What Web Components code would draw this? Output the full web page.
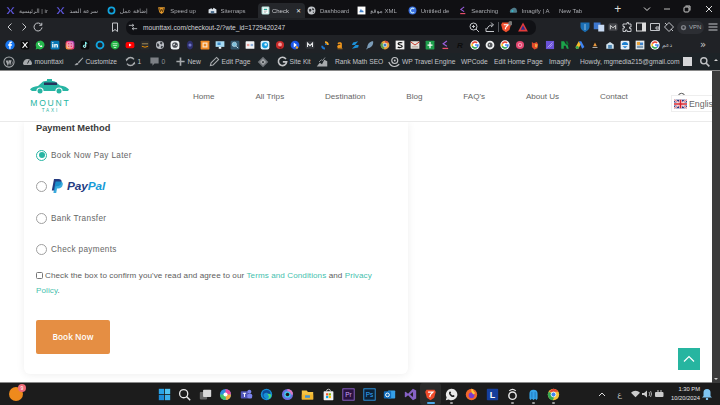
<!DOCTYPE html>
<html lang="en">
<head>
<meta charset="utf-8">
<title>Checkout</title>
<style>
  html, body { margin: 0; height: 100%; overflow: hidden; background: #fff; }
  body { display: flex; flex-direction: column; width: 720px; height: 405px; font-family: "Liberation Sans", Arial, sans-serif; }
</style>
</head>
<body>
<browser-tabs></browser-tabs>
<browser-toolbar url="mounttaxi.com/checkout-2/?wte_id=1729420247"></browser-toolbar>
<bookmarks-bar></bookmarks-bar>
<wp-admin-bar></wp-admin-bar>
<site-viewport>
  <site-header></site-header>
  <payment-card title="Payment Method">
    <pay-option checked>Book Now Pay Later</pay-option>
    <pay-option><paypal-logo></paypal-logo></pay-option>
    <pay-option>Bank Transfer</pay-option>
    <pay-option>Check payments</pay-option>
  </payment-card>
  <back-to-top></back-to-top>
</site-viewport>
<windows-taskbar></windows-taskbar>

<script>
// all icons are drawn on a 16x16 box
const G_ARCS = `<circle cx="8" cy="8" r="7.5" fill="#fff"/>
  <path d="M8 4.4a3.6 3.6 0 0 1 2.5 1l1.7-1.7A6 6 0 0 0 2.7 5.3l2 1.5A3.6 3.6 0 0 1 8 4.4z" fill="#ea4335"/>
  <path d="M2.7 5.3a6 6 0 0 0 0 5.4l2-1.5a3.6 3.6 0 0 1 0-2.4z" fill="#fbbc05"/>
  <path d="M2.7 10.7A6 6 0 0 0 12 12.4l-1.9-1.5a3.6 3.6 0 0 1-5.4-1.7z" fill="#34a853"/>
  <path d="M14 8c0-.5 0-.9-.2-1.3H8v2.4h3.4a3 3 0 0 1-1.3 1.8l1.9 1.5A6 6 0 0 0 14 8z" fill="#4285f4"/>`;
const ICONS = {
  fb: `<circle cx="8" cy="8" r="7.5" fill="#1877f2"/><path d="M9 14V9h2l.3-2.2H9V5.5c0-.7.3-1 1-1h1.3V2.6C11 2.5 10.4 2.5 9.8 2.5 7.9 2.5 6.8 3.6 6.8 5.4v1.4H5V9h1.8v5z" fill="#fff"/>`,
  x: `<rect x="1" y="1" width="14" height="14" rx="3" fill="#0b0b0b"/><path d="M12 3.5l-8 9" stroke="#fff" stroke-width="1.7"/><path d="M3.5 3.5h2l7 9h-2z" fill="#fff"/>`,
  wa: `<path d="M8 1a7 7 0 0 0-6 10.5L1 15l3.6-1A7 7 0 1 0 8 1z" fill="#25b84c"/><path d="M5.5 4.5c-1 1-.8 2.600.6 4.300s3 2.700 4.400 2.300c1-.3 1.400-1.300 1.200-1.600L10.300 8.500l-.9.8C8.500 9 7 7.600 6.800 6.600l.8-.9L6.700 4.300c-.3-.1-.9 0-1.200.2z" fill="#fff"/>`,
  in: `<rect x="1" y="1" width="14" height="14" rx="2" fill="#0a78b5"/><path d="M3.5 6.5h2V12h-2zM6.8 6.5h2v.8c.4-.6 1-1 1.900-1 1.300 0 2 .9 2 2.400V12h-2V9c0-.7-.3-1-.9-1s-1 .4-1 1.100V12h-2z" fill="#fff"/><circle cx="4.5" cy="4.4" r="1.1" fill="#fff"/>`,
  ig: `<defs><linearGradient id="ig" x1="0" y1="1" x2="1" y2="0"><stop offset="0" stop-color="#fdb32b"/><stop offset=".5" stop-color="#ea2f6e"/><stop offset="1" stop-color="#8a3ac0"/></linearGradient></defs><rect x="1" y="1" width="14" height="14" rx="4" fill="url(#ig)"/><rect x="3.5" y="3.5" width="9" height="9" rx="2.5" fill="none" stroke="#fff"/><circle cx="8" cy="8" r="2" fill="none" stroke="#fff"/>`,
  tt: `<rect x="1" y="1" width="14" height="14" rx="3" fill="#0b0b0b"/><path d="M8.8 3v6.800a1.800 1.800 0 1 1-1.800-1.800M8.800 3c.2 1.500 1.200 2.500 2.800 2.700" fill="none" stroke="#25f4ee" stroke-width="1.4"/><path d="M9.3 3.400v6.800a1.800 1.800 0 1 1-1.800-1.800" fill="none" stroke="#fff" stroke-width="1.2"/>`,
  ring: `<circle cx="8" cy="8" r="5.5" fill="none" stroke="#11a5e0" stroke-width="3"/>`,
  gcir: `<circle cx="8" cy="8" r="7" fill="#1fb141"/><path d="M4 6h8M4.500 9h7M6 12h4" stroke="#d9f6df" stroke-width="1.3"/>`,
  yt: `<rect x="1" y="3" width="14" height="10" rx="3" fill="#f00"/><path d="M6.500 5.500v5l4-2.500z" fill="#fff"/>`,
  amz: `<rect x="1" y="1" width="14" height="14" rx="2" fill="#2b2b2b"/><path d="M3 6h10" stroke="#8c7a52" stroke-width="2"/><path d="M3 10q5 3 10 0" fill="none" stroke="#f90" stroke-width="1.4"/>`,
  globe: `<circle cx="8" cy="8" r="6.5" fill="#b9bcc2"/><path d="M3 5l3 1 1 3-2 2-2-2zM9 2l3 2-1 3-3-1zM10 9l3 1-2 3-2-1z" fill="#3c4046"/>`,
  wglobe: `<rect x="1" y="1" width="14" height="14" rx="4" fill="#eceff1"/><circle cx="8" cy="8" r="4.5" fill="#4a4e55"/><path d="M5 7l2-2 1 2-2 2zM9 8l2 0-1 2z" fill="#eceff1"/>`,
  shield: `<path d="M8 1c3 0 5 3 5 7s-2 7-5 7-5-3-5-7 2-7 5-7z" fill="#2d2f6e"/><circle cx="8" cy="8" r="2.5" fill="#7378c8"/>`,
  ora: `<rect x="1" y="1" width="14" height="14" rx="1" fill="#f08a24"/><rect x="4" y="4" width="8" height="8" fill="#fbe2c6"/><rect x="6" y="6" width="4" height="4" fill="#f08a24"/>`,
  mon: `<rect x="1" y="2" width="14" height="9" fill="#a8dcf5"/><rect x="6" y="11" width="4" height="3" fill="#e8f2f8"/><rect x="4" y="4" width="5" height="4" fill="#3b87c8"/>`,
  mag: `<rect x="1" y="1" width="14" height="14" rx="2" fill="#33566c"/><circle cx="7" cy="7" r="3.5" fill="#7dc0dc" stroke="#c8e2ee"/><path d="M10 10l3 3" stroke="#c8e2ee" stroke-width="1.5"/>`,
  net: `<rect x="1" y="2" width="14" height="12" rx="1" fill="#f2f4f6"/><path d="M3 7h4M3 9h4" stroke="#e2574c"/><path d="M9 7h4M9 9h4" stroke="#3b78c9"/>`,
  sky: `<rect x="1" y="1" width="14" height="14" rx="3" fill="#ddf2fb"/><circle cx="8" cy="8" r="5" fill="#189ee0"/><circle cx="9" cy="7" r="2" fill="#ddf2fb"/>`,
  red: `<circle cx="8" cy="8" r="6.5" fill="#c92a2a"/><circle cx="8" cy="7" r="3" fill="#f39a9a"/><path d="M6 12l4-1 0 3z" fill="#7a1010"/>`,
  blu: `<circle cx="8" cy="8" r="7" fill="#1a56e8"/><path d="M6 4l5 4-5 4z" fill="#fff"/><circle cx="11" cy="12" r="2" fill="#f5a623"/>`,
  m: `<rect x="1" y="2" width="14" height="12" rx="2" fill="#33363b"/><path d="M4 11V5l4 4 4-4v6" fill="none" stroke="#e9eaec" stroke-width="1.7"/>`,
  swirl: `<path d="M8 2a6 6 0 0 1 6 6h-3a3 3 0 0 0-3-3z" fill="#f5a623"/><path d="M2 9a6 6 0 0 0 6 6v-3a3 3 0 0 1-3-3z" fill="#1a77d2"/><path d="M8 5a3 3 0 0 1 3 3H8z" fill="#1a77d2"/>`,
  a: `<path d="M4 5.5c.5-2 6.5-3 7 .5v7H8.500v-1c-2 1.800-5 1-5-1.500 0-2.200 2.300-3 5-3 .3-1.700-2-1.700-2.500-.5z" fill="#f0961c"/><path d="M4 14h8" stroke="#f0961c"/>`,
  s: `<path d="M13 2L5 4 3 8h6L3 14l10-2 1-4H8z" fill="#1c8fd6"/>`,
  feather: `<path d="M13 2C8 2 4 6 3.500 12L2 14.500l1 .5L4.500 13C10 12.500 14 8 13 2z" fill="#7b9cb8"/>`,
  chrome: `<circle cx="8" cy="8" r="7" fill="#e8a33a"/><path d="M8 1a7 7 0 0 1 6 3.500H8z" fill="#d94a38"/><path d="M2 4.500A7 7 0 0 0 6 14.700L8 8z" fill="#5a9e4b"/><circle cx="8" cy="8" r="3" fill="#3f7fc8" stroke="#fff"/>`,
  ssq: `<rect x="1" y="1" width="14" height="14" fill="#f2f2f2"/><path d="M11.500 5C11 3.800 5 3.500 5 6s6.500 1.500 6.500 4S5.500 12.500 4.500 11" fill="none" stroke="#111" stroke-width="2"/>`,
  mail: `<rect x="1" y="2" width="14" height="12" rx="1" fill="#e7e2dc"/><path d="M1 3l7 5 7-5" fill="none" stroke="#c53a2c" stroke-width="1.6"/><path d="M3 11h10" stroke="#907a6f"/>`,
  gsq: `<rect x="1" y="1" width="14" height="14" rx="1" fill="#1e9e4b"/><path d="M8 3v10M4 8h8" stroke="#fff" stroke-width="2"/>`,
  chev: `<path d="M11 1.500L5 6l6 4" fill="none" stroke="#9b5fe0" stroke-width="1.8"/><path d="M4 13.500h9" stroke="#f0506e" stroke-width="2"/>`,
  r: `<text x="8" y="13" font-family="Liberation Sans" font-weight="700" font-size="13" text-anchor="middle" fill="#0c0c0c">R</text>`,
  g: G_ARCS,
  wg: `<circle cx="8" cy="8" r="7" fill="#eff0f1"/><circle cx="8" cy="8" r="4" fill="#55585c"/><path d="M6 6l2 1-1 3z" fill="#eff0f1"/>`,
  pink: `<circle cx="8" cy="8" r="6.5" fill="#e0466f"/><circle cx="8" cy="8" r="2.8" fill="none" stroke="#f6a9be" stroke-width="1.4"/>`,
  fox: `<path d="M3 3l3 2 5-2 2 4-1 6-5 2-4-4z" fill="#e24a2b"/><path d="M8 6l4 1-1 5-3-1z" fill="#f3a443"/>`,
  pur: `<rect x="1.5" y="1.5" width="13" height="13" fill="#6a52d8"/><path d="M4 12L12 4M7 12l5-5" stroke="#d2c8fa"/>`,
  flag: `<path d="M2 2h4.500l3 5H12L14 14h-3L9 9H6v5H2z" fill="#1ba34a"/><path d="M9 2h3l2 5h-3z" fill="#0d6d30"/>`,
  ads: `<path d="M6 2h4l5 9-3.500 3z" fill="#3f85f4"/><path d="M6 2l3 5.500-4 7H2L1 11z" fill="#f7bb2a"/><circle cx="3.5" cy="12" r="2.5" fill="#34a853"/>`,
  dk: `<rect x="1" y="1" width="14" height="14" rx="1" fill="#1d1d1d"/><path d="M8 4l3 6H5z" fill="#e8963a"/><path d="M4 12h8" stroke="#fff"/>`,
  home: `<path d="M8 3l6 4v7H2V7z" fill="#cfe0ec"/><rect x="5" y="8" width="6" height="6" fill="#4f87b5"/>`,
  cloud: `<rect x="1" y="1" width="14" height="14" rx="2" fill="#e6eff6"/><path d="M3 8a5 5 0 0 1 10 0z" fill="#1c7fd0"/><path d="M4 10h8l-4 3z" fill="#1c7fd0"/>`,
  pic: `<rect x="1" y="1" width="14" height="14" fill="#e9eef2"/><rect x="3" y="3" width="5" height="5" fill="#e8a23a"/><rect x="8" y="4" width="5" height="4" fill="#3f82c9"/><rect x="3" y="9" width="10" height="4" fill="#7f9cb4"/>`,
  xmlsq: `<rect x="1" y="1" width="14" height="14" fill="#fff"/><path d="M4 11l3-6 2 4 1.500-2L12 11z" fill="#3f7fc8"/>`,
  edge: `<circle cx="8" cy="8" r="7" fill="#178fd6"/><path d="M3 8a5 5 0 0 1 10-1c0 1.800-3 2-3 .5C10 6 7 5 5 7c-1.500 1.500-.5 5.500 3 6-3 1-5-2-5-5z" fill="#0d4c9c"/><path d="M9 7c2 0 5 .5 5 2 0 3-3 5-5 4.500 1-.5 2-1.500 2-3z" fill="#4fd97a"/>`,
  untitled: `<circle cx="8" cy="8" r="7" fill="#3a6fe0"/><path d="M11 5a4 4 0 1 0 0 6" fill="none" stroke="#bfeaff" stroke-width="2"/>`,
  w: `<path d="M2 2h12l-2 9-4 3-4-3z" fill="#e49a2d"/><path d="M4.500 4l1.500 6 2-4 2 4 1.500-6" fill="none" stroke="#3a2204" stroke-width="1.3"/>`,
  nitro: `<path d="M1 2h3l4 6 4-6h3L10 8l5 6h-3L8 9l-4 5H1l5-6z" fill="#5c54d8"/>`,
  sitemap: `<path d="M1 13V6l5-2 2 2 2-3 5 3v7z" fill="#dce3ea"/><rect x="5" y="9" width="6" height="4" fill="#4d6f8f"/>`,
  check: `<rect x="1" y="1" width="14" height="14" rx="2" fill="#bfe8e2"/><rect x="3.5" y="3" width="9" height="10" fill="#fff"/><path d="M5 6h6" stroke="#25a898" stroke-width="2"/><path d="M5 9h6M5 11h4" stroke="#7a8a88"/>`,
  dash: `<circle cx="8" cy="8" r="7" fill="#c2c5c9"/><path d="M3 6l4-1 1 3-3 3zM10 3l3 3-2 2-2-2zM10 10l3 0-2 3z" fill="#2b2d31"/>`,
  imagify: `<path d="M2 12a5 5 0 0 1 3-7 5 5 0 0 1 9 3 3 3 0 0 1-1 4z" fill="#4f7b8a"/><circle cx="6" cy="9" r="2" fill="#36b6c8"/>`
};
const svg = (name, size = 10) => `<svg width="${size}" height="${size}" viewBox="0 0 16 16" aria-hidden="true">${ICONS[name]}</svg>`;

// ---------- tabs
const TABS = [
  ['nitro', 'الرئيسية | ir'], ['nitro', 'سرعة الصد'], ['ring', 'إضافة عمل'], ['w', 'Speed up'],
  ['sitemap', 'Sitemaps'], ['check', 'Check', true], ['dash', 'Dashboard'], ['xmlsq', 'موقع XML'],
  ['untitled', 'Untitled de'], ['chev', 'Searching'], ['imagify', 'Imagify | A'], [null, 'New Tab']
];
class BrowserTabs extends HTMLElement {
  connectedCallback() {
    const tabs = TABS.map(([icon, label, active]) => `
      <div class="tab ${active ? 'active' : ''}">
        ${icon ? svg(icon, 9) : ''}<span>${label}</span>${active ? '<b>✕</b>' : ''}
      </div>`).join('');
    this.attachShadow({ mode: 'open' }).innerHTML = `
      <style>
        :host { display: flex; align-items: center; height: 18px; background: #101013; padding-left: 5px; color: #a9abb0; font: 6px "Liberation Sans", "DejaVu Sans", sans-serif; }
        .tab { flex: none; box-sizing: border-box; width: 50.4px; height: 15px; margin-top: 3px; display: flex; align-items: center; gap: 4px; padding-left: 1px; overflow: hidden; white-space: nowrap; }
        .tab span { flex: 1; overflow: hidden; -webkit-mask-image: linear-gradient(90deg, #000 75%, transparent); }
        .tab.active { width: 47px; margin: 3px 1px 0 1px; padding: 0 4px 0 3px; gap: 2px; background: #25272b; border-radius: 4px 4px 0 0; color: #c7c9cd; }
        .tab b { font: 6px "DejaVu Sans", sans-serif; color: #e8e8e8; }
        .plus { margin-left: 6px; width: 20px; color: #ddd; font-size: 12px; }
        .win { margin-left: auto; display: flex; align-items: center; gap: 12px; padding-right: 7px; }
        .win svg:last-child { margin-left: 2px; }
      </style>
      ${tabs}
      <div class="plus">+</div>
      <div class="win">
        <svg width="8" height="8" viewBox="0 0 8 8"><path d="M1 2.500l3 3 3-3" fill="none" stroke="#ddd"/></svg>
        <svg width="8" height="8" viewBox="0 0 8 8"><path d="M1 4h6" stroke="#bbb"/></svg>
        <svg width="8" height="8" viewBox="0 0 8 8"><rect x="1" y="2" width="5" height="5" rx="1" fill="none" stroke="#ccc"/><path d="M2.500 1H7v4.500" fill="none" stroke="#ccc"/></svg>
        <svg width="8" height="8" viewBox="0 0 8 8"><path d="M1 1l6 6M7 1L1 7" stroke="#ddd"/></svg>
      </div>`;
  }
}

// ---------- address bar row
class BrowserToolbar extends HTMLElement {
  connectedCallback() {
    const line = (d, w = 12) => `<svg width="${w}" height="12" viewBox="0 0 12 12"><path d="${d}" fill="none" stroke="#c4c6ca" stroke-width="1"/></svg>`;
    this.attachShadow({ mode: 'open' }).innerHTML = `
      <style>
        :host { display: flex; align-items: center; height: 18px; background: #202226; padding-left: 4px; color: #d4d6da; font: 6.6px "Liberation Sans", "DejaVu Sans", sans-serif; }
        .group { display: flex; align-items: center; }
        .nav { gap: 2px; width: 117px; }
        .url { box-sizing: border-box; width: 410px; height: 15px; margin-left: 5px; background: #101115; border-radius: 7px; padding: 0 7px 0 2px; display: flex; align-items: center; gap: 5px; }
        .url span { flex: 1; }
        .url .tools { display: flex; align-items: center; gap: 4px; }
        .sep { margin: 0 -2.500px; }
        .tri { margin-left: 1px; }
        .ext { margin-left: 43px; gap: 2px; }
        .vpn { display: flex; align-items: center; gap: 2px; height: 13px; padding: 0 3px; border-radius: 7px; background: #2c2e33; font-size: 6px; color: #aeb0b5; }
        .burger { margin-left: 1px; display: flex; }
      </style>
      <div class="group nav">
        ${line('M7.500 2.500L4 6l3.500 3.500')}
        ${line('M4.500 2.500L8 6 4.500 9.500')}
        ${line('M9.500 4A4 4 0 1 0 10 6.500M9.800 1.800V4.300H7.300')}
        <span style="margin-left:63px;display:flex">${line('M3.500 2h5v8.500L6 8.500 3.500 10.500z')}</span>
      </div>
      <div class="url">
        ${line('M1 4h6M5 2.500L7 4 5 5.500M11 8H5M7 6.500L5 8l2 1.500', 10)}
        <span>${this.getAttribute('url')}</span>
        <div class="tools">
          ${line('M8 8l3 3M2 5.500a3.500 3.500 0 1 0 7 0 3.500 3.500 0 1 0-7 0M4 5.500h3M5.500 4v3')}
          ${line('M2 7v3.500h8M3 8c1-3 3-4 5.500-4M7 1.500L9.500 4 7 6')}
          <svg class="sep" width="1" height="10"><rect width="1" height="10" fill="#55575c"/></svg>
          <svg width="12" height="12" viewBox="0 0 16 16"><path d="M3 2h10l1.500 3-2 7L8 15l-4.500-3-2-7z" fill="#f1502f"/><path d="M5 5h6L8 8l-1 3" fill="none" stroke="#fff" stroke-width="1.5"/><circle cx="14" cy="3" r="3" fill="#777"/></svg>
          <svg class="tri" width="12" height="12" viewBox="0 0 16 16"><path d="M8 2l6.500 12h-13z" fill="#e23b3b"/><path d="M8 6l3 5.500H5z" fill="#2c2f8f"/></svg>
        </div>
      </div>
      <div class="group ext">
        <svg width="12" height="12" viewBox="0 0 16 16"><path d="M2 2h12v6c0 3-3 5-6 7-3-2-6-4-6-7z" fill="#1b6fb5"/><path d="M8 4v8" stroke="#bcd9f0"/></svg>
        <svg width="12" height="12" viewBox="0 0 16 16"><rect x="1" y="2" width="9" height="9" fill="#3d77cf"/><rect x="7" y="5" width="8" height="9" fill="#c9dbf3"/></svg>
        <svg width="12" height="12" viewBox="0 0 16 16"><rect x="2" y="3" width="12" height="10" rx="2" fill="#45474c"/><path d="M4.500 11V6l3.500 3 3.500-3v5" fill="none" stroke="#d9d9d9" stroke-width="1.2"/></svg>
        ${line('M4 3h2V1.500h1.500V3H10v3H8.500v1.500H10V10.500H6V9H4.500v1.500H2V7h1.500V5.500H2V3z')}
        <svg width="12" height="12" viewBox="0 0 12 12"><rect x="1.500" y="2" width="9" height="8" fill="none" stroke="#ddd"/><rect x="7" y="2" width="3.500" height="8" fill="#ddd"/></svg>
        ${line('M1.500 2.500h9v7h-9zM7 6h3v2H7z')}
        ${line('M6 1.500L10.500 6 6 10.500 1.500 6zM4 4L2 2M8 8l2 2')}
        <div class="vpn">
          <svg width="7" height="7" viewBox="0 0 8 8"><circle cx="4" cy="4" r="3" fill="#7e8187"/><circle cx="4" cy="4" r="1.3" fill="#2c2e33"/></svg>VPN
        </div>
        <span class="burger">${line('M1.500 3h9M1.500 6h9M1.500 9h9')}</span>
      </div>`;
  }
}

// ---------- bookmarks
const MARKS = ['fb','x','wa','in','ig','tt','ring','gcir','yt','amz','globe','wglobe','shield','ora','mon','mag','net','sky','red','blu','m','swirl','a','s',
  'feather','chrome','ssq','mail','gsq','chev','r','g','wg','g','pink','fox','pur','flag','ads','dk','home','cloud','pic','g'];
class BookmarksBar extends HTMLElement {
  connectedCallback() {
    this.attachShadow({ mode: 'open' }).innerHTML = `
      <style>
        :host { display: flex; align-items: center; height: 17px; background: #202226; padding-left: 2px; color: #b9bbbf; font: 6px "DejaVu Sans", sans-serif; }
        i { flex: none; width: 15px; display: flex; justify-content: center; }
        .label { width: 38px; }
        .more { font: 10px "DejaVu Sans", sans-serif; color: #c8c8c8; }
      </style>
      ${MARKS.map(m => `<i>${svg(m)}</i>`).join('')}
      <span class="label">دعم</span>
      <span class="more">»</span>`;
  }
}

// ---------- wordpress bar
const WP_ICONS = {
  wp: `<circle cx="8" cy="8" r="6.8" fill="none" stroke="#a7aaad" stroke-width="1.4"/><path d="M3.500 6l3 7.500 1.500-4.500-1.200-3zM7.500 5.500h4L9.500 13l-1-3z M12.700 6.500c.6 2 0 4-1.500 5.500z" fill="#a7aaad"/>`,
  dash: `<path d="M1.500 11a6.500 6.500 0 1 1 13 0l-1 2h-11z" fill="#a7aaad"/><path d="M8 11l2.500-5" stroke="#1d2327" stroke-width="1.3"/>`,
  brush: `<path d="M14 2L7 9l1.500 1.500L15 3zM6 10c-2 0-2 2-4 3 3 1 6 0 6-2z" fill="#a7aaad"/>`,
  sync: `<path d="M13 5A5.800 5.800 0 0 0 3 5M3 11a5.800 5.800 0 0 0 10 0" fill="none" stroke="#a7aaad" stroke-width="2"/><path d="M1 4l4 .5L2 8zM15 12l-4-.5L14 8z" fill="#a7aaad"/>`,
  bubble: `<path d="M2 2h12v9H8l-3 3v-3H2z" fill="#7c8085"/>`,
  plus: `<path d="M8 2v12M2 8h12" stroke="#a7aaad" stroke-width="2.4"/>`,
  pen: `<path d="M11 2l3 3-8 8-4 1 1-4z" fill="none" stroke="#a7aaad" stroke-width="1.5"/>`,
  gem: `<path d="M8 1l7 7-7 7-7-7z" fill="#6f7479"/><path d="M8 4l4 4-4 4-4-4z" fill="#a7aaad"/><path d="M8 6.500L9.500 8 8 9.500 6.500 8z" fill="#1d2327"/>`,
  g: `<path d="M13 4.500A6 6 0 1 0 14 8.500H8.500" fill="none" stroke="#c3c4c7" stroke-width="2.4"/>`,
  rank: `<path d="M1 14l4-5 3 2 3-6 4 2v7z" fill="#a7aaad"/><path d="M4 8l3-3 2 1 3-4" fill="none" stroke="#a7aaad"/>`,
  travel: `<circle cx="9" cy="6" r="4" fill="none" stroke="#c3c4c7" stroke-width="1.5"/><path d="M1 8c2 5 5 6 8 6 2 0 4-1 6-3" fill="none" stroke="#c3c4c7" stroke-width="1.5"/><circle cx="9" cy="6" r="1.3" fill="#c3c4c7"/>`,
  find: `<circle cx="7" cy="7" r="4.500" fill="none" stroke="#c3c4c7" stroke-width="2"/><path d="M10.500 10.500L15 15" stroke="#c3c4c7" stroke-width="2.4"/>`
};
const wpIcon = (name, size = 11) => `<svg width="${size}" height="${size}" viewBox="0 0 16 16">${WP_ICONS[name]}</svg>`;
class WpAdminBar extends HTMLElement {
  connectedCallback() {
    // icon, label, slot width, gap between icon and label
    const items = [
      [wpIcon('wp', 12), '', 18.5],
      [wpIcon('dash'), 'mounttaxi', 51],
      [wpIcon('brush'), 'Customize', 52],
      [wpIcon('sync'), '1', 24],
      [wpIcon('bubble'), '<span class="dim">0</span>', 26],
      [wpIcon('plus'), 'New', 34],
      [wpIcon('pen'), 'Edit Page', 48.5],
      [wpIcon('gem', 12), '', 19.5],
      [wpIcon('g'), 'Site Kit', 39.5],
      [wpIcon('rank', 12), 'Rank Math SEO', 72, 7],
      [wpIcon('travel', 12), 'WP Travel Engine', 73],
      ['', 'WPCode', 33],
      ['', 'Edit Home Page', 55],
      ['', 'Imagify', 31],
      ['', 'Howdy, mgmedia215@gmail.com', 103]
    ];
    this.attachShadow({ mode: 'open' }).innerHTML = `
      <style>
        :host { display: flex; align-items: center; height: 17px; background: #1d2327; padding-left: 3px; color: #c3c4c7; font: 6.700px "Liberation Sans", "DejaVu Sans", sans-serif; white-space: nowrap; }
        .item { flex: none; display: flex; align-items: center; gap: 2px; }
        .dim { color: #8c8f94; }
        .avatar { width: 9px; height: 9px; background: #d5d6d8; }
        .find { margin-left: 7px; display: flex; }
      </style>
      ${items.map(([icon, text, w, gap]) => `<div class="item" style="width:${w}px${gap ? `;gap:${gap}px` : ''}">${icon}${text ? `<span>${text}</span>` : ''}</div>`).join('')}
      <div class="avatar"></div>
      <div class="find">${wpIcon('find')}</div>`;
  }
}

// ---------- page area with scrollbar
class SiteViewport extends HTMLElement {
  constructor() {
    super();
    this.attachShadow({ mode: 'open' }).innerHTML = `
      <style>
        :host { display: flex; flex: 1; min-height: 0; border-top: 1px solid #8a8a8a; }
        .page { position: relative; flex: 1; min-width: 0; display: flex; flex-direction: column; background: #fff; overflow: hidden; border-bottom: 1px solid #8a8a8a; }
        .scroll { width: 8px; background: #3b3b3b; display: flex; flex-direction: column; justify-content: space-between; align-items: center; padding: 0 0 3px; }
        .scroll i { width: 0; height: 0; border: 2.500px solid transparent; }
        .up { border-top: 0 !important; border-bottom-color: #cfcfcf !important; margin-top: -12px; }
        .down { border-bottom: 0 !important; border-top-color: #cfcfcf !important; }
      </style>
      <div class="page"><slot></slot></div>
      <div class="scroll"><i class="up"></i><i class="down"></i></div>`;
  }
}

// ---------- site header
class SiteHeader extends HTMLElement {
  connectedCallback() {
    const links = ["Home", "All Trips", "Destination", "Blog", "FAQ's", "About Us", "Contact"];
    this.attachShadow({ mode: 'open' }).innerHTML = `
      <style>
        :host { position: relative; z-index: 2; flex: none; display: flex; align-items: center; height: 50px; background: #fff; border-bottom: 1px solid #eaeaea; font-family: "Liberation Sans", Arial, sans-serif; }
        .logo { margin-left: 30px; width: 39px; display: flex; flex-direction: column; align-items: center; color: #27b5a3; }
        .logo svg { display: block; }
        .mount { font: 8.600px "Liberation Sans", sans-serif; letter-spacing: 1.700px; margin-right: -1.700px; line-height: 10px; margin-top: 3px; }
        .taxi { font: 4.600px "Liberation Sans", sans-serif; letter-spacing: 1.900px; margin-right: -1.900px; line-height: 5px; margin-top: .5px; }
        nav { margin-left: 124px; display: flex; gap: 40.800px; color: #666; font-size: 8.100px; }
        .search { position: absolute; left: 677px; top: 21px; }
        .lang { position: absolute; left: 671px; top: 24px; box-sizing: border-box; width: 41px; height: 17px; padding-left: 2px; background: #fff; border: 1px solid #eee; border-right: 0; display: flex; align-items: center; gap: 2px; font-size: 8.800px; color: #666; overflow: hidden; white-space: nowrap; }
      </style>
      <div class="logo">
        <svg width="39" height="16" viewBox="0 0 39 16">
          <path d="M0 10.500c1-2 4-3 8-3.500l5-4.500c2-1 10-1 12 0l5 4c4 .5 7 1.500 9 4l-1 1.500H2z" fill="#27b5a3"/>
          <rect x="17" y="0" width="5" height="2" fill="#27b5a3"/>
          <rect x="14" y="3.500" width="13" height="2.500" fill="#25335c"/>
          <circle cx="10" cy="12" r="3.600" fill="#fff"/><circle cx="10" cy="12" r="2.500" fill="#27b5a3"/>
          <circle cx="29" cy="12" r="3.600" fill="#fff"/><circle cx="29" cy="12" r="2.500" fill="#27b5a3"/>
        </svg>
        <div class="mount">MOUNT</div>
        <div class="taxi">TAXI</div>
      </div>
      <nav>${links.map(l => `<span>${l}</span>`).join('')}</nav>
      <svg class="search" width="9" height="9" viewBox="0 0 9 9"><circle cx="4.500" cy="4.500" r="3.200" fill="none" stroke="#555"/></svg>
      <div class="lang">
        <svg width="13" height="10" viewBox="0 0 60 40" style="flex:none">
          <rect width="60" height="40" fill="#27337f"/>
          <path d="M0 0l60 40M60 0L0 40" stroke="#fff" stroke-width="8"/>
          <path d="M0 0l60 40M60 0L0 40" stroke="#d8242c" stroke-width="3"/>
          <path d="M30 0v40M0 20h60" stroke="#fff" stroke-width="13"/>
          <path d="M30 0v40M0 20h60" stroke="#d8242c" stroke-width="8"/>
        </svg>English
      </div>`;
  }
}

// ---------- payment card
class PaymentCard extends HTMLElement {
  connectedCallback() {
    this.attachShadow({ mode: 'open' }).innerHTML = `
      <style>
        :host { display: block; flex: none; box-sizing: border-box; width: 384px; margin-left: 24px; padding: 0 12px; height: 252px; background: #fff; border-radius: 0 0 6px 6px; box-shadow: 0 1px 8px rgba(0,0,0,.07); color: #666; font-family: "Liberation Sans", Arial, sans-serif; }
        h2 { margin: 0; font-size: 9.300px; line-height: 12px; color: #3b3b3b; font-weight: 700; }
        .options { display: flex; flex-direction: column; margin-top: 5.400px; }
        .terms { margin: 3.100px 0 0; font-size: 8.100px; line-height: 15px; letter-spacing: .08px; color: #5d5d5d; }
        .terms a { color: #45bfae; text-decoration: none; }
        .box { display: inline-block; box-sizing: border-box; width: 7px; height: 7px; border: 1px solid #777; border-radius: 1.500px; background: #fff; margin-right: 2px; vertical-align: -.5px; }
        button { display: block; margin-top: 21.500px; width: 74px; height: 34px; padding: 0; border: 0; border-radius: 2px; background: #e58e43; color: #fff; font: 600 8.300px "Open Sans", sans-serif; }
      </style>
      <h2>${this.getAttribute('title')}</h2>
      <div class="options"><slot></slot></div>
      <p class="terms"><span class="box"></span>Check the box to confirm you've read and agree to our <a>Terms and Conditions</a> and <a>Privacy</a> <a>Policy</a>.</p>
      <button>Book Now</button>`;
  }
}

class PayOption extends HTMLElement {
  connectedCallback() {
    const on = this.hasAttribute('checked');
    this.attachShadow({ mode: 'open' }).innerHTML = `
      <style>
        :host { display: flex; align-items: center; gap: 4px; height: 31.500px; font-size: 8.200px; letter-spacing: .34px; color: #666; }
        .radio { flex: none; box-sizing: border-box; width: 11px; height: 11px; border-radius: 50%; border: 1px solid ${on ? '#27b5a3' : '#a0a0a0'}; display: flex; align-items: center; justify-content: center; }
        .radio i { width: 6px; height: 6px; border-radius: 50%; background: #27b5a3; }
      </style>
      <div class="radio">${on ? '<i></i>' : ''}</div>
      <slot></slot>`;
  }
}

class PaypalLogo extends HTMLElement {
  connectedCallback() {
    this.attachShadow({ mode: 'open' }).innerHTML = `
      <style>
        :host { display: flex; align-items: center; gap: 4px; margin-top: -1px; }
        span { font: italic 700 11.800px "Liberation Sans", sans-serif; letter-spacing: -.1px; color: #253b80; }
        b { color: #179bd7; }
      </style>
      <svg width="12" height="14" viewBox="0 0 12 14">
        <path d="M3 0h4.500C10 0 11 1.500 10.500 3.500 10 6 8.300 7.300 6 7.300H4.600L3.800 11.500H.8z" fill="#253b80"/>
        <path d="M4.600 2.500h4.500c2.300 0 3 1.400 2.600 3.300-.5 2.500-2.200 3.700-4.500 3.700H6L5.200 14H2.400z" fill="#179bd7" opacity=".85"/>
      </svg>
      <span>Pay<b>Pal</b></span>`;
  }
}

class BackToTop extends HTMLElement {
  connectedCallback() {
    this.attachShadow({ mode: 'open' }).innerHTML = `
      <style>
        :host { position: absolute; left: 678px; top: 277px; width: 22px; height: 22px; background: #26b5a0; display: flex; align-items: center; justify-content: center; }
      </style>
      <svg width="12" height="8" viewBox="0 0 12 8"><path d="M1 6.500l5-5 5 5" fill="none" stroke="#fff" stroke-width="1.2"/></svg>`;
  }
}

// ---------- taskbar
const TB = {
  win: `<rect x="1" y="1" width="6.500" height="6.500" fill="#2aa3e6"/><rect x="8.500" y="1" width="6.500" height="6.500" fill="#4fc3f2"/><rect x="1" y="8.500" width="6.500" height="6.500" fill="#1c8cd8"/><rect x="8.500" y="8.500" width="6.500" height="6.500" fill="#3bb0ec"/>`,
  find: `<circle cx="7" cy="7" r="5" fill="none" stroke="#e8e8e8" stroke-width="1.6"/><path d="M10.500 10.500L15 15" stroke="#e8e8e8" stroke-width="1.8"/>`,
  view: `<rect x="1" y="5" width="9" height="9" rx="1" fill="#666"/><rect x="5" y="2" width="10" height="9" rx="1" fill="#d9d9d9"/>`,
  copilot: `<circle cx="8" cy="8" r="6.800" fill="#2f8fe0"/><path d="M8 1.200A6.800 6.800 0 0 1 14.800 8H8z" fill="#e84aa0"/><path d="M8 8h6.800A6.800 6.800 0 0 1 8 14.800z" fill="#f3a93c"/><path d="M1.200 8A6.800 6.800 0 0 0 8 14.800V8z" fill="#45c46b"/><circle cx="8" cy="8" r="2.500" fill="#fff"/>`,
  teams: `<rect x="1" y="4" width="9" height="9" rx="1" fill="#4f55b8"/><circle cx="11.500" cy="4.500" r="2.500" fill="#7b83eb"/><rect x="9" y="7" width="6" height="6" rx="2" fill="#7b83eb"/><path d="M3.500 6.500h4M5.500 6.500V11" stroke="#fff" stroke-width="1.2"/>`,
  edge: ICONS.edge,
  copilot2: `<circle cx="8" cy="8" r="6.800" fill="#6a70e0"/><circle cx="8" cy="8" r="4" fill="#40c4e8"/><circle cx="8" cy="8" r="2.200" fill="#1c1c1c"/><path d="M8 1.200A6.800 6.800 0 0 1 14.800 8H12a4 4 0 0 0-4-4z" fill="#e07ac0"/>`,
  folder: `<path d="M1 3h6l1.500 2H15v9H1z" fill="#f6c343"/><rect x="1" y="8" width="14" height="6" fill="#f1b52e"/><rect x="5" y="9" width="6" height="3" fill="#3e93d6"/>`,
  store: `<rect x="2" y="4" width="12" height="11" rx="1" fill="#f0f0f0"/><path d="M5.500 4a2.500 2.500 0 0 1 5 0" fill="none" stroke="#ddd"/><rect x="5" y="6.500" width="2.700" height="2.700" fill="#f25022"/><rect x="8.300" y="6.500" width="2.700" height="2.700" fill="#7fba00"/><rect x="5" y="9.800" width="2.700" height="2.700" fill="#00a4ef"/><rect x="8.300" y="9.800" width="2.700" height="2.700" fill="#ffb900"/>`,
  pr: `<rect x="1" y="1" width="14" height="14" fill="#2a1240" stroke="#9a6ce0"/><text x="8" y="11" text-anchor="middle" font-family="Liberation Sans" font-size="8" fill="#c9a3f5">Pr</text>`,
  ps: `<rect x="1" y="1" width="14" height="14" fill="#0c2238" stroke="#31a8ff"/><text x="8" y="11" text-anchor="middle" font-family="Liberation Sans" font-size="8" fill="#31a8ff">Ps</text>`,
  outlook: `<rect x="6" y="3" width="9" height="10" rx="1" fill="#35a0e8"/><rect x="1" y="4" width="9" height="9" rx="1" fill="#0f6cbd"/><circle cx="5.500" cy="8.500" r="2.300" fill="none" stroke="#fff" stroke-width="1.2"/>`,
  vs: `<path d="M11 1l4 2v10l-4 2-6-6-3 2.500L1 11V5l1-.5L5 7z" fill="#8661c5"/><path d="M11 5L7.500 8l3.500 3z" fill="#1c1c1c"/>`,
  brave: `<path d="M3 2h10l1.500 3-2 7L8 15l-4.500-3-2-7z" fill="#ef4a2a"/><path d="M5 5h6L8 8l-1 3" fill="none" stroke="#fff" stroke-width="1.5"/>`,
  wa: `<path d="M8 1a7 7 0 0 0-6 10.500L1 15l3.600-1A7 7 0 1 0 8 1z" fill="#e8e8e8"/><path d="M5.500 4.500c-1 1-.8 2.600.6 4.300s3 2.700 4.400 2.300c1-.3 1.400-1.300 1.200-1.600L10.300 8.500l-.9.8C8.500 9 7 7.600 6.800 6.600l.8-.9L6.700 4.300c-.3-.1-.9 0-1.200.2z" fill="#1c1c1c"/>`,
  firefox: `<circle cx="8" cy="8" r="7" fill="#f2662c"/><circle cx="8" cy="9" r="3.500" fill="#7a3bd0"/><path d="M8 1c3 1 2 4 5 5l-3 2c-1-2-3-3-2-7z" fill="#ffc93c"/>`,
  l: `<rect x="1" y="1" width="14" height="14" rx="1" fill="#153e9c"/><text x="8" y="12" text-anchor="middle" font-family="Liberation Sans" font-weight="700" font-size="11" fill="#fff">L</text>`,
  ring: `<circle cx="8" cy="9.500" r="4.500" fill="none" stroke="#e8e8e8" stroke-width="1.8"/><path d="M4 3.500a6 6 0 0 1 8 0" fill="none" stroke="#e8e8e8" stroke-width="1.5"/>`,
  blue: `<path d="M3 13V7a5 5 0 0 1 10 0v6l-1.500 2-1.500-2-2 2-2-2-1.500 2z" fill="#36a3e8"/><path d="M6 5v7M10 5v7" stroke="#1a6fb5"/>`,
  chrome: `<circle cx="8" cy="8" r="7" fill="#f5c33b"/><path d="M8 1a7 7 0 0 1 6 3.500H8L3 5A7 7 0 0 1 8 1z" fill="#e34335"/><path d="M2 4.500A7 7 0 0 0 7 15l3-6z" fill="#34a853"/><circle cx="8" cy="8" r="3" fill="#4285f4" stroke="#fff"/>`
};
const tb = (name, size = 13) => `<svg width="${size}" height="${size}" viewBox="0 0 16 16">${TB[name]}</svg>`;
class WindowsTaskbar extends HTMLElement {
  connectedCallback() {
    const apps = ['win','find','view','copilot','teams','edge','copilot2','folder','store','pr','ps','outlook','vs','brave','wa','firefox','l','ring','blue','chrome'];
    const marks = { brave: 'active', ring: 'dot', blue: 'dot', chrome: 'dot', wa: 'dot' };
    this.attachShadow({ mode: 'open' }).innerHTML = `
      <style>
        :host { flex: none; display: flex; align-items: center; height: 22px; background: #1c1c1c; color: #e4e4e4; font: 5.800px "Liberation Sans", "DejaVu Sans", sans-serif; }
        .weather { position: relative; margin-left: 9px; width: 14px; height: 14px; border-radius: 50%; background: #ee8a1d; flex: none; }
        .badge { position: absolute; right: -3px; top: -3px; width: 8px; height: 8px; border-radius: 50%; background: #f06a78; color: #fff; font-size: 5px; line-height: 8px; text-align: center; }
        .apps { display: flex; margin-left: 130.750px; }
        .app { position: relative; flex: none; width: 20.500px; height: 22px; display: flex; align-items: center; justify-content: center; }
        .app.active { background: #2b2b2b; border-radius: 3px; }
        .app.active::after, .app.dot::after { content: ''; position: absolute; bottom: 1px; height: 2px; border-radius: 1px; }
        .app.active::after { width: 8px; background: #4aa8e8; }
        .app.dot::after { width: 3px; background: #9a9a9a; }
        .tray { margin-left: auto; display: flex; align-items: center; padding-right: 8px; }
        .clock { text-align: right; line-height: 9px; margin: 0 2px 0 6px; }
        .lng { margin: 0 9px 0 11.500px; font-family: "DejaVu Sans", sans-serif; font-size: 8px; color: #bbb; }
      </style>
      <div class="weather"><span class="badge">9</span></div>
      <div class="apps">${apps.map(a => `<div class="app ${marks[a] || ''}">${tb(a)}</div>`).join('')}</div>
      <div class="tray">
        <svg width="8" height="6" viewBox="0 0 8 6"><path d="M1 5l3-3 3 3" fill="none" stroke="#ddd"/></svg>
        <span class="lng">ع</span>
        <svg width="9" height="8" viewBox="0 0 10 8" style="margin-right:2px"><path d="M5 7.500L0 2.500a7 7 0 0 1 10 0z" fill="#ccc"/></svg>
        <svg width="10" height="8" viewBox="0 0 10 8" style="margin-right:2px"><path d="M0 3h2l3-2.500v7L2 5H0z" fill="#ccc"/><path d="M7 2a3 3 0 0 1 0 4M8.500 1a5 5 0 0 1 0 6" fill="none" stroke="#ccc" stroke-width=".8"/></svg>
        <svg width="11" height="8" viewBox="0 0 11 8"><rect x="1" y="2" width="8.500" height="5" rx="1" fill="#ccc"/><path d="M4 0v2M7 0v2" stroke="#ccc"/></svg>
        <div class="clock">1:30 PM<br>10/20/2024</div>
        <svg width="10" height="11" viewBox="0 0 10 11"><path d="M5 0a3.500 3.500 0 0 0-3.500 3.500V7L0 8.500h10L8.500 7V3.500A3.500 3.500 0 0 0 5 0z" fill="#7fc4f0"/><circle cx="5" cy="10" r="1.200" fill="#7fc4f0"/></svg>
      </div>`;
  }
}

customElements.define('browser-tabs', BrowserTabs);
customElements.define('browser-toolbar', BrowserToolbar);
customElements.define('bookmarks-bar', BookmarksBar);
customElements.define('wp-admin-bar', WpAdminBar);
customElements.define('site-viewport', SiteViewport);
customElements.define('site-header', SiteHeader);
customElements.define('payment-card', PaymentCard);
customElements.define('pay-option', PayOption);
customElements.define('paypal-logo', PaypalLogo);
customElements.define('back-to-top', BackToTop);
customElements.define('windows-taskbar', WindowsTaskbar);
</script>
</body>
</html>
